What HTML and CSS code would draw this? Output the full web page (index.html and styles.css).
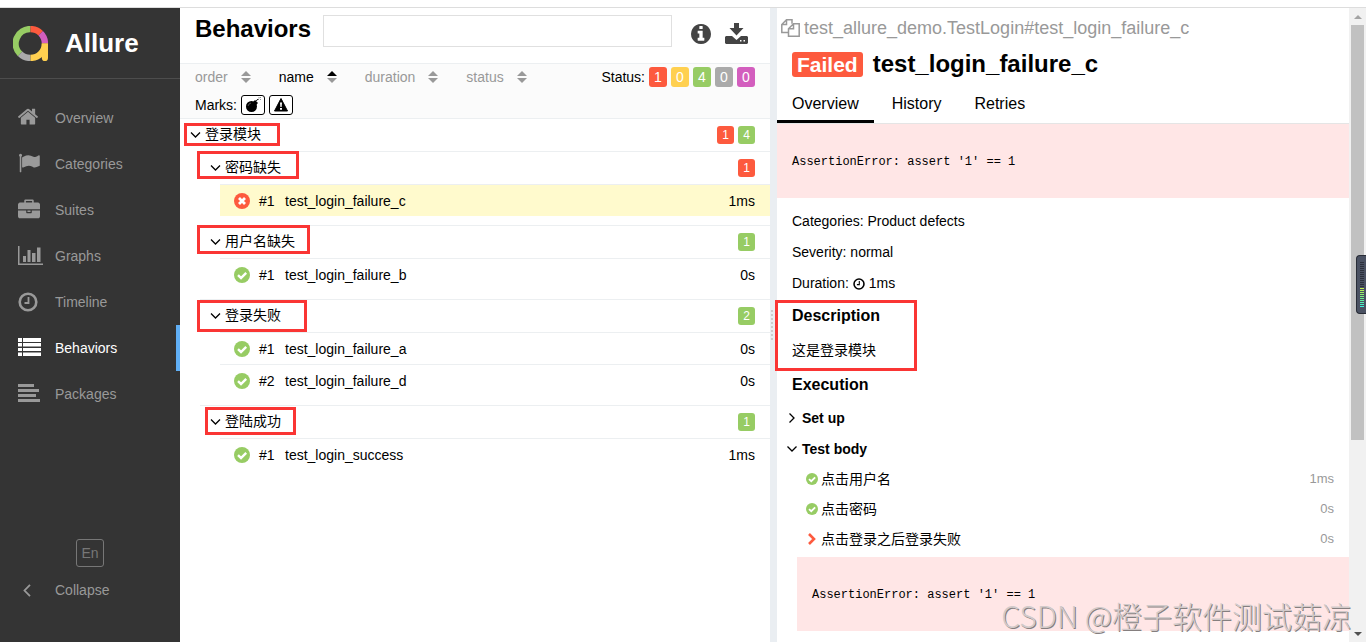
FILE: index.html
```html
<!DOCTYPE html>
<html lang="en">
<head>
<meta charset="utf-8">
<title>Allure Report</title>
<meta name="viewport" content="width=device-width, initial-scale=1">
<link rel="stylesheet" href="styles.css">
</head>
<body>
<svg class="defs" aria-hidden="true">
  <symbol id="down" viewBox="0 0 10 6"><path d="M.5.5 5 5 9.500.5" fill="none" stroke="currentColor" stroke-width="1.300"/></symbol>
  <symbol id="ok" viewBox="0 0 16 16"><circle cx="8" cy="8" r="8" fill="#97cc64"/><path d="M4 8.200 7 11 12.200 5.800" fill="none" stroke="#fff" stroke-width="2.400"/></symbol>
  <symbol id="fail" viewBox="0 0 16 16"><circle cx="8" cy="8" r="8" fill="#fd5a3e"/><path d="m5 5 6 6m0-6-6 6" fill="none" stroke="#fff" stroke-width="2.800"/></symbol>
  <symbol id="sort" viewBox="0 0 10 12"><path d="M0 5 5 0l5 5z"/><path d="M0 7h10l-5 5z"/></symbol>
  <symbol id="clock" viewBox="0 0 20 20"><circle cx="10" cy="10" r="8.300" fill="none" stroke="currentColor" stroke-width="2.600"/><path d="M10.500 5v6H6.500" fill="none" stroke="currentColor" stroke-width="1.800"/></symbol>
</svg>
<div class="app">
  <aside class="side">
    <a class="brand" href="#">
      <svg class="brand-logo" viewBox="0 0 34 34" fill="none" stroke-width="6.200">
        <path d="M6.900 27.100A14 14 0 0 1 17 3" stroke="#97cc64"/>
        <path d="M17 3a14 14 0 0 1 9.900 4.100" stroke="#fd5a3e"/>
        <path d="M26.900 7.100A14 14 0 0 1 31 17" stroke="#d35ebe"/>
        <path d="M17 31a14 14 0 0 1-10.100-4" stroke="#aaa"/>
        <path d="M31 17a14 14 0 0 1-14 14" stroke="#ffd050"/>
        <path d="M31 17v14" stroke="#ffd050" stroke-width="6"/><circle cx="31" cy="31" r="3" fill="#ffd050"/>
      </svg>
      <span class="brand-name">Allure</span>
    </a>
    <nav class="menu">
      <a class="menu-item" href="#"><span class="slot raise"><svg width="20" height="17" viewBox="90 230 1612 1310"><path fill="currentColor" d="M1472 992v480q0 26-19 45t-45 19h-384v-384h-256v384h-384q-26 0-45-19t-19-45v-480q0-1 .5-3t.5-3l575-474 575 474q1 2 1 6zm223-69l-62 74q-8 9-21 11h-3q-13 0-21-7l-692-577-692 577q-12 8-24 7-13-2-21-11l-62-74q-8-10-7-23.500t11-21.500l719-599q32-26 76-26t76 26l244 204v-195q0-14 9-23t23-9h192q14 0 23 9t9 23v408l219 182q10 8 11 21.500t-7 23.500z"/></svg></span>Overview</a>
      <a class="menu-item" href="#"><span class="slot raise"><svg width="22" height="20" viewBox="0 64 1792 1664"><path fill="currentColor" d="M320 256q0 72-64 110v1266q0 13-9.500 22.500t-22.500 9.500h-64q-13 0-22.500-9.500t-9.500-22.500v-1266q-64-38-64-110 0-53 37.500-90.500t90.500-37.500 90.500 37.500 37.500 90.500zm1472 64v763q0 25-12.500 38.500t-39.500 27.500q-215 116-369 116-61 0-123.500-22t-108.500-48-115.500-48-142.500-22q-192 0-464 146-17 9-33 9-26 0-45-19t-19-45v-742q0-32 31-55 21-14 79-43 236-120 421-120 107 0 200 29t219 88q38 19 88 19 54 0 117.500-21t110-47 88-47 54.500-21q26 0 45 19t19 45z"/></svg></span>Categories</a>
      <a class="menu-item" href="#"><span class="slot raise"><svg width="22" height="20" viewBox="0 0 1792 1560"><path fill="currentColor" d="M640 256h512v-128h-512v128zm1152 640v480q0 66-47 113t-113 47h-1472q-66 0-113-47t-47-113v-480h672v160q0 26 19 45t45 19h320q26 0 45-19t19-45v-160h672zm-768 0v128h-256v-128h256zm768-480v384h-1792v-384q0-66 47-113t113-47h352v-160q0-40 28-68t68-28h576q40 0 68 28t28 68v160h352q66 0 113 47t47 113z"/></svg></span>Suites</a>
      <a class="menu-item" href="#"><span class="slot"><svg width="25" height="20" viewBox="0 0 25 20" fill="currentColor"><path d="M0 0h1.500v17.500H25V19H0zM5 10h3v6H5zM9.500 4h3v12h-3zM14 7h3.500v9H14zM19 1.500h3.500V16H19z"/></svg></span>Graphs</a>
      <a class="menu-item" href="#"><span class="slot"><svg width="20" height="20"><use href="#clock"/></svg></span>Timeline</a>
      <a class="menu-item active" href="#"><span class="slot raise"><svg width="23" height="18" viewBox="0 0 23 18" fill="currentColor"><path d="M0 0h4v4H0zM5 0h18v4H5zM0 5h4v3.500H0zM5 5h18v3.500H5zM0 10h4v3H0zM5 10h18v3H5zM0 14.500h4V18H0zM5 14.500h18V18H5z"/></svg></span>Behaviors</a>
      <a class="menu-item" href="#"><span class="slot raise"><svg width="22" height="18" viewBox="0 0 22 18" fill="currentColor"><path d="M0 0h16v3H0zM0 5h21v3H0zM0 10h18v3H0zM0 15h22v3H0z"/></svg></span>Packages</a>
    </nav>
    <div class="side-foot">
      <button class="lang" type="button">En</button>
      <button class="menu-item" type="button"><span class="slot"><svg class="collapse-icon" width="8" height="13" viewBox="0 0 8 13"><path d="M7 .8 1.500 6.500 7 12.200" fill="none" stroke="currentColor" stroke-width="1.800"/></svg></span>Collapse</button>
    </div>
  </aside>

  <main class="list">
    <header class="list-head">
      <h1 class="list-title">Behaviors</h1>
      <input class="search" type="text" aria-label="Search">
      <div class="tools">
        <button type="button" aria-label="Information"><svg width="20" height="20" viewBox="128 128 1536 1536"><path fill="currentColor" d="M1152 1376v-160q0-14-9-23t-23-9h-96v-512q0-14-9-23t-23-9h-320q-14 0-23 9t-9 23v160q0 14 9 23t23 9h96v320h-96q-14 0-23 9t-9 23v160q0 14 9 23t23 9h448q14 0 23-9t9-23zm-128-896v-160q0-14-9-23t-23-9h-192q-14 0-23 9t-9 23v160q0 14 9 23t23 9h192q14 0 23-9t9-23zm640 416q0 209-103 385.500t-279.500 279.500-385.500 103-385.500-103-279.500-279.500-103-385.500 103-385.500 279.500-279.500 385.500-103 385.500 103 279.500 279.500 103 385.500z"/></svg></button>
        <button type="button" aria-label="Download"><svg width="23" height="22" viewBox="0 0 23 22" fill="currentColor"><path d="M9 0h5v5h4.500L11.500 12.500 4.500 5H9z"/><path fill-rule="evenodd" d="M1 13h6l4.500 4 4.500-4h6l1 1v6l-1 1H1l-1-1v-6zM15 17v1.500h1.500V17zm3.500 0v1.500H20V17z"/></svg></button>
      </div>
    </header>
    <div class="filters">
      <div class="filter-row">
        <div class="sorters">
          <button class="sorter" type="button">order<svg width="10" height="12"><use href="#sort"/></svg></button>
          <button class="sorter on" type="button">name<svg width="10" height="12" viewBox="0 0 10 12"><path d="M0 5 5 0l5 5z"/><path fill="#999" d="M0 7h10l-5 5z"/></svg></button>
          <button class="sorter" type="button">duration<svg width="10" height="12"><use href="#sort"/></svg></button>
          <button class="sorter" type="button">status<svg width="10" height="12"><use href="#sort"/></svg></button>
        </div>
        <div class="statuses">
          <span>Status:</span>
          <button class="badge big red" type="button">1</button>
          <button class="badge big yellow" type="button">0</button>
          <button class="badge big green" type="button">4</button>
          <button class="badge big gray" type="button">0</button>
          <button class="badge big purple" type="button">0</button>
        </div>
      </div>
      <div class="marks">
        <span>Marks:</span>
        <button class="mark" type="button" aria-label="Flaky"><svg width="16" height="16" viewBox="0 0 16 16"><circle cx="6.500" cy="9.500" r="5.500"/><path d="m8 5 2-2 3 3-2 2z"/><path d="M10.500 4.500q1.500-2.500 3-2" fill="none" stroke="#000"/><path d="M14 0v1.500M16 2.500h-1M15 1l1-1" stroke="#777" stroke-width=".8"/><path d="M3 9q.5-2.500 3-3" fill="none" stroke="#777" stroke-width=".7"/></svg></button>
        <button class="mark" type="button" aria-label="New failed"><svg width="14" height="14" viewBox="0 0 14 14"><path d="M7 .5 13.500 13H.5z" stroke="#000" stroke-linejoin="round"/><path d="M6 4.500h2L7.600 9H6.400zM6 10h2v1.800H6z" fill="#fff"/></svg></button>
      </div>
    </div>
    <div class="tree">
      <button class="node" type="button"><svg class="chev"><use href="#down"/></svg><span class="node-name">登录模块</span><span class="badge red">1</span><span class="badge green">4</span></button>
      <section class="group">
        <button class="node" type="button"><svg class="chev"><use href="#down"/></svg><span class="node-name">密码缺失</span><span class="badge red">1</span></button>
        <a class="leaf selected" href="#"><svg class="state"><use href="#fail"/></svg><span class="num">#1</span><span class="leaf-name">test_login_failure_c</span><span>1ms</span></a>
      </section>
      <section class="group">
        <button class="node" type="button"><svg class="chev"><use href="#down"/></svg><span class="node-name">用户名缺失</span><span class="badge green">1</span></button>
        <a class="leaf" href="#"><svg class="state"><use href="#ok"/></svg><span class="num">#1</span><span class="leaf-name">test_login_failure_b</span><span>0s</span></a>
      </section>
      <section class="group">
        <button class="node" type="button"><svg class="chev"><use href="#down"/></svg><span class="node-name">登录失败</span><span class="badge green">2</span></button>
        <a class="leaf" href="#"><svg class="state"><use href="#ok"/></svg><span class="num">#1</span><span class="leaf-name">test_login_failure_a</span><span>0s</span></a>
        <a class="leaf" href="#"><svg class="state"><use href="#ok"/></svg><span class="num">#2</span><span class="leaf-name">test_login_failure_d</span><span>0s</span></a>
      </section>
      <section class="group">
        <button class="node" type="button"><svg class="chev"><use href="#down"/></svg><span class="node-name">登陆成功</span><span class="badge green">1</span></button>
        <a class="leaf" href="#"><svg class="state"><use href="#ok"/></svg><span class="num">#1</span><span class="leaf-name">test_login_success</span><span>1ms</span></a>
      </section>
    </div>
  </main>

  <div class="gutter"><div class="grip"></div></div>

  <div class="detail-wrap">
    <article class="detail">
      <div class="path"><svg width="19" height="18" viewBox="0 0 19 18" fill="none" stroke="currentColor" stroke-width="1.500"><path d="M7.500 13.500H.8V5.500L5.500.8H11v4M.8 5.500h4.700V.8"/><path d="M12.500 4.800h5.700v12.400H7.500V9.700zM7.500 9.700h5V4.800"/></svg><span>test_allure_demo.TestLogin#test_login_failure_c</span></div>
      <h2 class="test-title"><span class="failed">Failed</span>test_login_failure_c</h2>
      <nav class="tabs"><a class="tab current" href="#">Overview</a><a class="tab" href="#">History</a><a class="tab" href="#">Retries</a></nav>
      <pre class="error">AssertionError: assert '1' == 1</pre>
      <div class="facts">
        <div>Categories: Product defects</div>
        <div>Severity: normal</div>
        <div class="duration">Duration: <svg width="12" height="12"><use href="#clock"/></svg> 1ms</div>
      </div>
      <h3 class="heading">Description</h3>
      <p class="description">这是登录模块</p>
      <h3 class="heading">Execution</h3>
      <div class="stages">
        <button class="stage" type="button"><svg width="10" height="10" viewBox="0 0 10 10"><path d="M2.500.5 7 5 2.500 9.500" fill="none" stroke="currentColor" stroke-width="1.300"/></svg>Set up</button>
        <button class="stage" type="button"><svg width="10" height="6"><use href="#down"/></svg>Test body</button>
      </div>
      <div class="step"><svg width="12" height="12"><use href="#ok"/></svg><span class="step-name">点击用户名</span><span class="time">1ms</span></div>
      <div class="step"><svg width="12" height="12"><use href="#ok"/></svg><span class="step-name">点击密码</span><span class="time">0s</span></div>
      <div class="step"><svg width="12" height="12" viewBox="0 0 12 12"><path d="m3 1 5 5-5 5" fill="none" stroke="#fd5a3e" stroke-width="2.600"/></svg><span class="step-name">点击登录之后登录失败</span><span class="time">0s</span></div>
      <pre class="error nested">AssertionError: assert '1' == 1</pre>
    </article>
    <div class="scroll">
      <svg width="8" height="4" viewBox="0 0 8 4"><path d="M0 4 4 0l4 4z" fill="#a3a3a3"/></svg>
      <div class="track"><div class="thumb"></div></div>
      <svg width="8" height="4" viewBox="0 0 8 4"><path d="M0 0h8L4 4z" fill="#505050"/></svg>
    </div>
  </div>

  <div class="box b1"></div><div class="box b2"></div><div class="box b3"></div><div class="box b4"></div><div class="box b5"></div><div class="box b6"></div>
  <div class="meter"><div class="meter-off"></div><div class="meter-on"></div></div>
  <div class="watermark">CSDN @橙子软件测试菇凉</div>
</div>
</body>
</html>
```
FILE: styles.css
```css
* { box-sizing: border-box; }
body {
  margin: 0;
  padding-top: 7px;
  height: 100vh;
  overflow: hidden;
  background: #fff;
  color: #000;
  font: 14px/20px "Liberation Sans", "Noto Sans CJK SC", sans-serif;
}
a { color: inherit; text-decoration: none; }
button { font: inherit; color: inherit; background: none; border: 0; padding: 0; }
svg { flex: none; display: block; }
.defs { position: absolute; width: 0; height: 0; }

.app { display: flex; height: 100%; border-top: 1px solid #ddd; }

/* Sidebar */
.side { width: 180px; flex: none; display: flex; flex-direction: column; background: #343434; color: #999; }
.brand { display: flex; align-items: center; gap: 17px; height: 71px; padding: 0 0 0 13px; border-bottom: 1px solid #4d4d4d; color: #fff; }
.brand-logo { width: 35px; height: 35px; }
.brand-name { font-size: 26px; font-weight: bold; }
.menu { padding-top: 16px; }
.menu-item { display: flex; align-items: center; width: 100%; height: 46px; padding-left: 18px; border-right: 4px solid transparent; text-align: left; }
.menu-item.active { color: #fff; border-right-color: #60aff5; }
.slot { width: 37px; flex: none; }
.raise { padding-bottom: 3px; }
.side-foot { margin-top: auto; padding-bottom: 29px; }
.lang { display: block; width: 28px; height: 28px; margin: 0 auto; border: 1px solid #777; border-radius: 3px; color: #777; }
.collapse-icon { margin-left: 5px; }

/* Behaviors list */
.list { flex: 1; min-width: 0; }
.list-head { display: flex; align-items: flex-start; height: 56px; padding: 7px 22px 0 15px; border-bottom: 1px solid #eceff1; }
.list-title { margin: 0; font-size: 24px; line-height: 28px; }
.search { flex: 1; min-width: 0; height: 32px; margin-left: 12px; padding: 0 8px; border: 1px solid #e0e0e0; background: #fff; font: inherit; }
.tools { display: flex; align-items: center; gap: 14px; height: 38px; margin-left: 19px; color: #444; }
.filters { height: 55px; padding: 3px 15px 0; background: #fbfbfb; border-bottom: 1px solid #eceff1; }
.filter-row { display: flex; justify-content: space-between; }
.sorters { display: flex; gap: 28px; }
.sorter { display: flex; align-items: center; gap: 13px; color: #999; fill: #999; }
.sorter.on { color: #000; fill: #000; }
.statuses { display: flex; gap: 4px; }
.badge { width: 17px; height: 18px; flex: none; border-radius: 3px; color: #fff; font-size: 12px; line-height: 18px; text-align: center; }
.badge.big { width: 18px; height: 20px; font-size: 14px; line-height: 20px; }
.red { background: #fd5a3e; }
.yellow { background: #ffd050; }
.green { background: #97cc64; }
.gray { background: #aaa; }
.purple { background: #d35ebe; }
.marks { display: flex; align-items: center; gap: 4px; margin-top: 8px; height: 20px; }
.mark { display: flex; align-items: center; justify-content: center; width: 24px; height: 20px; border: 1px solid #000; border-radius: 3px; background: #fff; }

.node { display: flex; align-items: center; gap: 4px; width: 100%; height: 32px; padding: 0 15px 0 10px; text-align: left; }
.chev { width: 11px; height: 6px; }
.node-name { flex: 1; padding-bottom: 2px; }
.group { margin-left: 20px; padding-bottom: 9px; border-top: 1px solid #eceff1; }
.leaf { display: flex; align-items: center; height: 32px; margin-left: 20px; padding: 0 15px 0 14px; border-top: 1px solid #eceff1; }
.selected { background: #fffacd; }
.state { width: 16px; height: 16px; }
.num { width: 35px; padding-left: 9px; }
.leaf-name { flex: 1; }

.gutter { width: 7px; flex: none; display: flex; align-items: center; justify-content: center; background: #eaeef2; }
.grip { width: 6px; height: 30px; background: repeating-linear-gradient(90deg, transparent 0 2px, #eaeef2 2px 4px), repeating-linear-gradient(#ccc 0 2px, #eaeef2 2px 4px); }

/* Test details */
.detail-wrap { display: flex; width: calc(50% - 94px); flex: none; }
.detail { flex: 1; min-width: 0; }
.path { display: flex; align-items: center; gap: 4px; height: 40px; padding-left: 4px; color: #999; font-size: 18px; }
.test-title { display: flex; align-items: center; gap: 10px; height: 32px; margin: 0; padding-left: 15px; font-size: 24px; }
.failed { padding: 0 5px; border-radius: 3px; background: #fd5a3e; color: #fff; font-size: 21px; line-height: 25px; }
.tabs { display: flex; gap: 3px; border-bottom: 1px solid #e5e5e5; font-size: 16px; }
.tab { padding: 7px 15px 0; border-bottom: 3px solid transparent; line-height: 33px; }
.current { border-color: #000; }
.error { margin: 0; padding: 29px 15px 27px; background: #ffe6e6; font: 12px/18px "Liberation Mono", monospace; }
.facts { padding: 8px 15px 0; line-height: 31px; }
.duration { display: flex; align-items: center; gap: 4px; }
.heading { margin: 0; padding-left: 15px; font-size: 16px; line-height: 33px; }
.description { margin: 0; padding-left: 15px; line-height: 36px; }
.stages { padding: 1px 10px 0; }
.stage { display: flex; align-items: center; gap: 5px; height: 31px; font-weight: bold; }
.step { display: flex; align-items: center; gap: 3px; height: 30px; padding: 0 15px 0 29px; }
.step-name { flex: 1; }
.time { color: #999; font-size: 13px; }
.nested { margin: 3px 0 0 20px; }

.scroll { display: flex; flex-direction: column; align-items: center; width: 17px; padding: 7px 0 6px; background: #f1f1f1; }
.track { flex: 1; width: 13px; margin: 6px 0; }
.thumb { height: 69%; background: #c1c1c1; }

/* Highlight frames drawn over the report */
.box { position: absolute; border: 3px solid #fa3534; }
.b1 { left: 184px; top: 123px; width: 96px; height: 23px; }
.b2 { left: 197px; top: 151px; width: 102px; height: 28px; }
.b3 { left: 197px; top: 225px; width: 113px; height: 29px; }
.b4 { left: 197px; top: 300px; width: 110px; height: 32px; }
.b5 { left: 205px; top: 407px; width: 91px; height: 28px; }
.b6 { left: 775px; top: 300px; width: 142px; height: 71px; }

.meter { position: absolute; right: 0; top: 255px; width: 10px; height: 59px; padding: 6px 2px 0 3px; border: 1px solid #282c36; border-right: 0; border-radius: 4px 0 0 4px; background: #4a5162; }
.meter-off { height: 26px; background: repeating-linear-gradient(#2c303b 0 1px, #4a5162 1px 2px); }
.meter-on { height: 20px; background: linear-gradient(#c4f04a, #6df08a, #35f0e4); background-clip: border-box; -webkit-mask: repeating-linear-gradient(#000 0 1px, transparent 1px 2px); mask: repeating-linear-gradient(#000 0 1px, transparent 1px 2px); }

.watermark {
  position: absolute;
  right: 14px;
  top: 595px;
  color: #d2caca;
  font: 300 30px/40px "Noto Sans CJK SC", sans-serif;
  text-shadow: 1px 1px 0 #857f7f;
  white-space: nowrap;
}
```
